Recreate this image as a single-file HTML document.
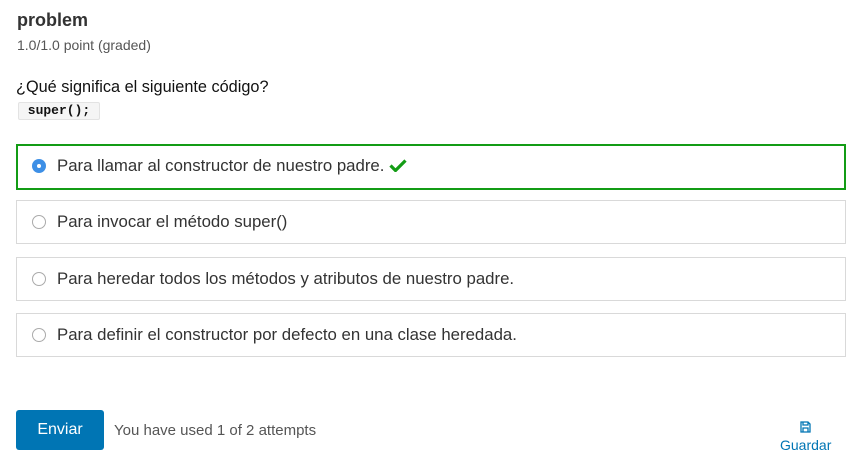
<!DOCTYPE html>
<html><head><meta charset="utf-8"><style>
body{margin:0;width:863px;height:476px;background:#fff;font-family:"Liberation Sans",sans-serif;color:#313131;position:relative;overflow:hidden}
.a{position:absolute;white-space:nowrap}
.box{position:absolute;left:16px;width:828px;height:42px;border:1px solid #d9d9d9;}
.box.ok{border:2px solid #139c15;width:826px;height:42px}
.box .r{position:absolute;left:15px;top:14px;width:12px;height:12px;border:1px solid #aaa;border-radius:50%;background:#fff}
.box .t{position:absolute;left:40px;top:11px;font-size:16.8px;color:#333}
.ok .r{left:14px;top:13px;width:14px;height:14px;border:none;background:#3d8fe6}
.ok .r:after{content:"";position:absolute;left:5px;top:5px;width:4px;height:4px;border-radius:50%;background:#fff}
.ok .t{left:39px;top:10px}
</style></head><body>
<div class="a" style="left:17px;top:10px;font-size:18px;font-weight:bold;color:#333">problem</div>
<div class="a" style="left:17px;top:37px;font-size:14px;color:#555">1.0/1.0 point (graded)</div>
<div class="a" style="left:16px;top:78px;font-size:16.3px;color:#111">¿Qué significa el siguiente código?</div>
<div class="a" style="left:18px;top:102px;width:80px;height:16px;background:#f5f5f5;border:1px solid #e3e3e3;border-radius:2px;font-family:'Liberation Mono',monospace;font-weight:bold;font-size:13px;line-height:16px;text-align:center;color:#111">super();</div>
<div class="box ok" style="top:144px"><div class="r"></div><div class="t">Para llamar al constructor de nuestro padre. <svg width="18" height="14" viewBox="0 0 18 14" style="vertical-align:-1px"><path d="M1.5 7.5l5 5 10-10" stroke="#139c15" stroke-width="3.2" fill="none"/></svg></div></div>
<div class="box" style="top:200px"><div class="r"></div><div class="t">Para invocar el método super()</div></div>
<div class="box" style="top:257px"><div class="r"></div><div class="t">Para heredar todos los métodos y atributos de nuestro padre.</div></div>
<div class="box" style="top:313px"><div class="r"></div><div class="t">Para definir el constructor por defecto en una clase heredada.</div></div>
<div class="a" style="left:16px;top:410px;width:88px;height:40px;background:#0075b4;border-radius:3px;color:#fff;font-size:16px;line-height:40px;text-align:center">Enviar</div>
<div class="a" style="left:114px;top:422px;font-size:15px;color:#555">You have used 1 of 2 attempts</div>
<svg class="a" style="left:800px;top:421px" width="11" height="12" viewBox="0 0 11 12"><path d="M1 1h7l2 2v8H1z M3 1v3h5V1 M3 11V7h5v4" stroke="#0075b4" stroke-width="1.3" fill="none"/></svg>
<div class="a" style="left:780px;top:437px;font-size:14px;color:#0075b4">Guardar</div>
</body></html>
